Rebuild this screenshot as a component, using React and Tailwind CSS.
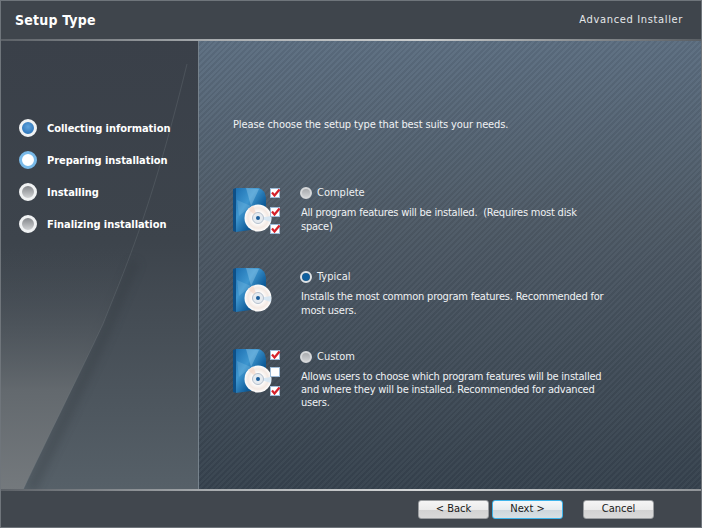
const font = "font-['DejaVu_Sans_Condensed','DejaVu_Sans',sans-serif]"

function Check({ x, y, on = true }) {
  return (
    <g transform={`translate(${x} ${y})`}>
      <rect x="0.5" y="0.5" width="9" height="9" fill="#fff" stroke="#9dbbd8" strokeWidth="1" />
      {on && <path d="M2 4.5 L4.5 7.5 L9.5 1.5" fill="none" stroke="#d5202a" strokeWidth="2.2" />}
    </g>
  )
}

function BoxIcon({ id, checks }) {
  return (
    <svg width="50" height="50" viewBox="0 0 50 50" className="block">
      <defs>
        <linearGradient id={`box-${id}`} x1="0" y1="0" x2="1" y2="1">
          <stop offset="0" stopColor="#1c6fb0" />
          <stop offset="0.35" stopColor="#3f97d0" />
          <stop offset="0.65" stopColor="#0f5c99" />
          <stop offset="1" stopColor="#0a4675" />
        </linearGradient>
        <radialGradient id={`disc-${id}`} cx="0.5" cy="0.5" r="0.5">
          <stop offset="0.4" stopColor="#ffffff" />
          <stop offset="0.75" stopColor="#f3e9e3" />
          <stop offset="1" stopColor="#ffffff" />
        </radialGradient>
      </defs>
      <path d="M0 3 L3 2 L3 46 L0 45 Z" fill="#0e4f86" />
      <path d="M3 2 L26 2 Q32 4 33 12 L33 42 L3 46 Z" fill={`url(#box-${id})`} />
      <path d="M13 2 L18 20 L26 3 Z" fill="#a5d8f2" opacity="0.35" />
      <path d="M4 14 L18 20 L6 30 Z" fill="#a5d8f2" opacity="0.2" />
      <circle cx="25" cy="32" r="13.5" fill={`url(#disc-${id})`} />
      <path d="M25 32 L20 19.5 L15 23 Z" fill="#f5d5c5" opacity="0.6" />
      <path d="M25 32 L38 30 L38 36 Z" fill="#cfe5f5" opacity="0.8" />
      <circle cx="25" cy="32" r="5.5" fill="#e6ebf0" stroke="#b5c0cd" strokeWidth="1" />
      <circle cx="25" cy="32" r="2" fill="#1d5f9c" />
      {checks.map((c, i) => (
        <Check key={i} x={c[0]} y={c[1]} on={c[2]} />
      ))}
    </svg>
  )
}

function StepDot({ kind }) {
  const inner =
    kind === "done"
      ? "bg-[radial-gradient(circle_at_50%_40%,#5fa3dc,#2068b0)]"
      : kind === "active"
      ? "bg-white"
      : "bg-[linear-gradient(180deg,#85888c,#d0d2d4)]"
  const ring = kind === "active" ? "border-[#78b9e8]" : "border-[#f0f2f3]"
  return (
    <div className={`w-[18px] h-[18px] rounded-full border-[3px] ${ring} ${inner} shrink-0`} />
  )
}

function Step({ label, kind }) {
  return (
    <div className="flex items-center h-8 gap-[10px]">
      <StepDot kind={kind} />
      <span className="text-[11px] font-bold tracking-[-0.05px] text-white whitespace-nowrap pt-[2px]">{label}</span>
    </div>
  )
}

function Radio({ on }) {
  return (
    <div
      className={`w-[12px] h-[12px] rounded-full border-2 shrink-0 ${
        on
          ? "border-[#dfe3e6] bg-[radial-gradient(circle,#0f5f9e_55%,#3c4650_100%)]"
          : "border-[#d6d8da] bg-[linear-gradient(180deg,#a9abae,#cfd1d3)]"
      }`}
    />
  )
}

function Option({ id, title, on, lines, checks, textClass, iconClass = "", className }) {
  return (
    <div className={`flex ${className}`}>
      <div className={`w-[67px] shrink-0 ${iconClass}`}>
        <BoxIcon id={id} checks={checks} />
      </div>
      <div>
        <div className="flex items-center gap-[5px] h-[13px]">
          <Radio on={on} />
          <span className="text-[11px] text-[#eef0f2] leading-[13px]">{title}</span>
        </div>
        <div className={`ml-[1px] text-[11px] ${textClass} tracking-[-0.22px] text-[#f0f2f4] whitespace-pre`}>
          {lines.join("\n")}
        </div>
      </div>
    </div>
  )
}

function Btn({ label, focus, className = "" }) {
  return (
    <div
      className={`w-[71px] h-[19px] rounded-[3px] border flex items-center justify-center text-[11px] text-[#1a1a1a] ${
        focus
          ? "border-[#3fb4ea] bg-[linear-gradient(180deg,#f4f8fa_0%,#e6ecef_50%,#cdd6dc_52%,#d8e0e4_100%)]"
          : "border-[#9a9da0] bg-[linear-gradient(180deg,#f5f5f5_0%,#ebebeb_50%,#d2d2d2_52%,#d9d9d9_100%)]"
      } ${className}`}
    >
      {label}
    </div>
  )
}

export default function App() {
  return (
    <div className={`w-[702px] h-[528px] bg-[#3f454c] border border-[#6f757b] flex flex-col overflow-hidden ${font}`}>
      <div className="h-[38px] shrink-0 flex items-center justify-between pl-[14px] pr-[18px] bg-[#3f454c]">
        <span className="text-[14px] font-bold text-white tracking-[0.2px]">Setup Type</span>
        <span className="text-[11px] text-[#e6e8ea] tracking-[0.65px]">Advanced Installer</span>
      </div>
      <div className="h-[2px] shrink-0 bg-[linear-gradient(90deg,#5c6167,#a7abae_30%,#c9cccd_60%,#5a5f64)]" />
      <div className="flex-1 flex min-h-0">
        <div className="relative w-[198px] shrink-0 bg-[linear-gradient(180deg,#3a4049_0%,#3d444c_45%,#566068_100%)] border-r border-[#76828c] overflow-hidden">
          <svg className="absolute inset-0" width="197" height="449" viewBox="0 0 197 449">
            <defs>
              <linearGradient id="wedge" x1="0" y1="449" x2="0" y2="200" gradientUnits="userSpaceOnUse">
                <stop offset="0" stopColor="#74797d" stopOpacity="1" />
                <stop offset="0.4" stopColor="#63696e" stopOpacity="1" />
                <stop offset="1" stopColor="#3d444c" stopOpacity="0" />
              </linearGradient>
              <filter id="soft" x="-20%" y="-20%" width="140%" height="140%">
                <feGaussianBlur stdDeviation="4" />
              </filter>
            </defs>
            <path
              d="M30 449 C53 400 88 330 108 283 C118 258 126 240 134 220"
              fill="none"
              stroke="#2e343b"
              strokeWidth="10"
              opacity="0.28"
              filter="url(#soft)"
            />
            <path
              d="M0 449 L22 449 C45 400 80 330 102 283 C125 225 150 170 186 23 L186 0 L0 0 Z"
              fill="url(#wedge)"
            />
            <path
              d="M22 449 C45 400 80 330 102 283 C125 225 150 170 186 23"
              fill="none"
              stroke="#8a9096"
              strokeWidth="1"
              opacity="0.22"
            />
          </svg>
          <div className="relative pt-[71px] pl-[18px]">
            <Step label="Collecting information" kind="done" />
            <Step label="Preparing installation" kind="active" />
            <Step label="Installing" kind="todo" />
            <Step label="Finalizing installation" kind="todo" />
          </div>
        </div>
        <div className="flex-1 pl-[34px] pt-[77px] bg-[repeating-linear-gradient(135deg,rgba(255,255,255,0.02)_0px,rgba(255,255,255,0.02)_2px,rgba(0,0,0,0.055)_2px,rgba(0,0,0,0.055)_4px),linear-gradient(180deg,#5d6f82_0%,#4f5b67_40%,#37434f_100%)]">
          <div className="text-[11px] leading-[14px] tracking-[-0.11px] text-[#f0f2f4]">
            Please choose the setup type that best suits your needs.
          </div>
          <Option
            id="a"
            title="Complete"
            lines={["All program features will be installed.  (Requires most disk", "space)"]}
            checks={[[37, 2, true], [37, 21, true], [37, 38, true]]}
            textClass="mt-[7px] leading-[14px]"
            className="mt-[54px]"
          />
          <Option
            id="b"
            title="Typical"
            on
            lines={["Installs the most common program features. Recommended for", "most users."]}
            checks={[]}
            textClass="mt-[7px] leading-[14px]"
            iconClass="-mt-[4px]"
            className="mt-[34px]"
          />
          <Option
            id="c"
            title="Custom"
            lines={["Allows users to choose which program features will be installed", "and where they will be installed. Recommended for advanced", "users."]}
            checks={[[37, 3, true], [37, 20, false], [37, 39, true]]}
            textClass="mt-[7px] leading-[13px]"
            iconClass="-mt-[3px]"
            className="mt-[32px]"
          />
        </div>
      </div>
      <div className="h-[2px] shrink-0 bg-[linear-gradient(90deg,#5c6167,#a7abae_30%,#d5d7d8_60%,#8f9397)]" />
      <div className="h-[36px] shrink-0 bg-[#41474e] flex items-center pl-[417px]">
        <Btn label="< Back" />
        <Btn label="Next >" focus className="ml-[3px]" />
        <Btn label="Cancel" className="ml-[20px]" />
      </div>
    </div>
  )
}
